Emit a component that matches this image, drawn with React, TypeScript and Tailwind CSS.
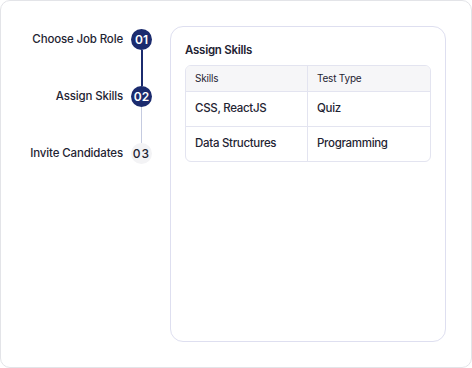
const STEPS = [
  { label: 'Choose Job Role', num: '01', done: true },
  { label: 'Assign Skills', num: '02', done: true },
  { label: 'Invite Candidates', num: '03', done: false },
]

const ROWS = [
  { skills: 'CSS, ReactJS', type: 'Quiz' },
  { skills: 'Data Structures', type: 'Programming' },
]

export default function App() {
  return (
    <div
      className="w-[472px] h-[368px] bg-white border border-[#e3e4e8] rounded-[10px] flex pt-[25px] pl-[25px] pr-[25px] pb-[25px] gap-[18px] text-[#1f2433]"
      style={{ fontFamily: 'Inter, "Noto Sans", sans-serif' }}
    >
      {/* Stepper */}
      <div className="flex flex-col w-[126px] shrink-0 pt-[3px]">
        {STEPS.map((step, i) => (
          <div key={step.num} className="flex flex-col items-end">
            <div className="flex items-center gap-[8px]">
              <span className="text-[11.5px] font-medium tracking-[-0.15px] whitespace-nowrap">{step.label}</span>
              <div
                className={
                  step.done
                    ? 'w-[21px] h-[21px] rounded-full bg-[#1b2b6e] text-white flex items-center justify-center text-[12px] font-semibold'
                    : 'w-[21px] h-[21px] rounded-full bg-[#f3f3f5] text-[#1f2433] flex items-center justify-center text-[12px] font-medium tracking-[1px]'
                }
              >
                {step.num}
              </div>
            </div>
            {i < STEPS.length - 1 && (
              <div className="w-[21px] flex justify-center">
                <div className={i === 0 ? 'w-[2px] h-[36px] bg-[#1b2b6e]' : 'w-[1px] h-[36px] bg-[#c5cbe0]'} />
              </div>
            )}
          </div>
        ))}
      </div>

      {/* Card */}
      <div className="flex-1 border border-[#dedff0] rounded-[13px] px-[14px] pt-[14px]">
        <h2 className="text-[11.5px] font-semibold tracking-[-0.25px] leading-[18px] mb-[6px]">Assign Skills</h2>
        <div className="border border-[#e3e4f0] rounded-[6px] overflow-hidden">
          <div className="grid grid-cols-[122px_1fr] bg-[#f6f6f8] h-[25px] text-[10px] tracking-[-0.2px] items-center">
            <div className="pl-[9px] h-full flex items-center border-r border-[#e3e4f0]">Skills</div>
            <div className="pl-[9px]">Test Type</div>
          </div>
          {ROWS.map((row) => (
            <div key={row.skills} className="grid grid-cols-[122px_1fr] h-[35px] text-[11.5px] font-medium tracking-[-0.3px] items-center border-t border-[#e3e4f0]">
              <div className="pl-[9px] h-full flex items-center border-r border-[#e3e4f0]">{row.skills}</div>
              <div className="pl-[9px]">{row.type}</div>
            </div>
          ))}
        </div>
      </div>
    </div>
  )
}
